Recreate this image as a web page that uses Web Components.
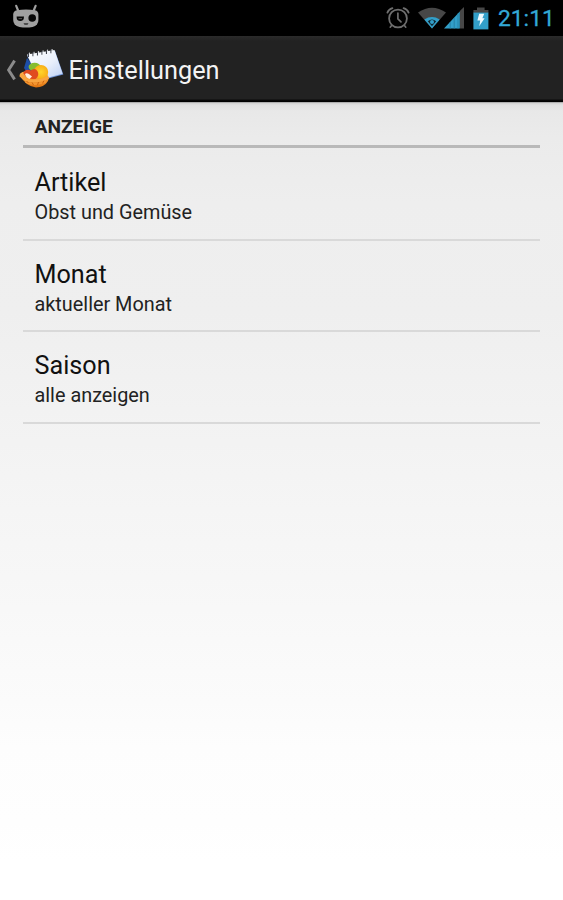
<!DOCTYPE html>
<html lang="de">
<head>
<meta charset="utf-8">
<title>Einstellungen</title>
<style>
html, body { margin: 0; height: 100%; }
body { font-family: Roboto, "Liberation Sans", sans-serif; overflow: hidden; }
</style>
</head>
<body>
<settings-screen></settings-screen>
<script>
const define = (name, html) => {
  const template = document.createElement('template');
  template.innerHTML = html;
  customElements.define(name, class extends HTMLElement {
    constructor() {
      super();
      this.attachShadow({ mode: 'open' }).append(template.content.cloneNode(true));
    }
  });
};

define('icon-robot', `
<style>:host{display:block;width:28px;height:26px} svg{display:block}</style>
<svg width="28" height="26" viewBox="0 0 28 26">
  <path d="M4.2 1.8 L6.3 7 M23.6 1.8 L21.5 7" stroke="#a0a0a0" stroke-width="2.2" stroke-linecap="round"/>
  <path d="M5 6.3 Q14 4.8 23 6.3 Q26.4 7 26.4 10.6 V16 Q26.4 21.5 20.5 22.9 Q14 24 7.5 22.9 Q1.2 21.5 1.2 16 V10.6 Q1.2 7 5 6.3Z" fill="#a0a0a0"/>
  <path d="M4.6 12.4 H12 Q12 17 8.3 17 Q4.6 17 4.6 12.4Z" fill="#080808"/>
  <path d="M6.5 14.6 H10" stroke="#555" stroke-width="1"/>
  <circle cx="20.2" cy="14" r="3.8" fill="#080808"/>
  <path d="M11.5 19.2 H16.5 L15.5 20.8 H12.5Z" fill="#303030"/>
</svg>`);

define('icon-alarm', `
<style>:host{display:block;width:24px;height:24px} svg{display:block}</style>
<svg width="24" height="24" viewBox="0 0 24 24" fill="none" stroke="#6e6e6e" stroke-linecap="round">
  <circle cx="12" cy="12.5" r="8.9" stroke-width="1.8"/>
  <path d="M11.9 7.2 V12.8 L15 15.8" stroke-width="1.7"/>
  <path d="M1.4 6.6 Q2.6 3.4 6.4 2.2 M22.6 6.6 Q21.4 3.4 17.6 2.2" stroke-width="1.8"/>
  <path d="M5.6 19.4 L4.2 21.2 M18.4 19.4 L19.8 21.2" stroke-width="1.6"/>
</svg>`);

define('icon-wifi', `
<style>:host{display:block;width:28px;height:22px} svg{display:block}</style>
<svg width="28" height="22" viewBox="0 0 28 22">
  <path d="M0 5.5 Q14 -4 28 5.5 L14 21.5Z" fill="#474747"/>
  <path d="M6.3 12.4 Q14 7.6 21.7 12.4 L14 21.5Z" fill="#329fc9"/>
  <path d="M9.8 14.2 Q14 10.8 18.2 14.2 L14 19.2Z" fill="#10252e"/>
  <circle cx="14" cy="15" r="2" fill="#329fc9"/>
</svg>`);

define('icon-signal', `
<style>:host{display:block;width:20px;height:22px} svg{display:block}</style>
<svg width="20" height="22" viewBox="0 0 20 22">
  <path d="M15.8 4 L20 0 V21.5 H15.8Z" fill="#474747"/>
  <path d="M0 21.5 L15.8 4.4 V21.5Z" fill="#329fc9"/>
  <path d="M6.2 15 V21.5 M10.2 11 V21.5 M14 6.5 V21.5" stroke="#2783a8" stroke-width="1"/>
</svg>`);

define('icon-battery', `
<style>:host{display:block;width:16px;height:23px} svg{display:block}</style>
<svg width="16" height="23" viewBox="0 0 16 23">
  <path d="M4 0.6 H11.6 V3 H15.4 V6 H0.4 V3 H4Z" fill="#474747"/>
  <path d="M0.4 5.6 H15.4 V22.4 H0.4Z" fill="#329fc9"/>
  <path d="M6.2 6.8 H11.2 L9.4 11.2 H11.6 L6.2 19.2 L7.2 13.4 H4.4Z" fill="#eefaff"/>
</svg>`);

define('status-bar', `
<style>
:host{display:flex;box-sizing:border-box;height:36px;padding:0 11px 0 12px;background:#000;align-items:center}
icon-robot{margin-top:-2px}
.system{display:flex;align-items:center;margin-left:auto}
icon-wifi{margin-left:8px} icon-signal{margin-left:-2px} icon-battery{margin-left:9px}
time{margin:1px 0 0 9px;font-size:22.8px;line-height:36px;-webkit-text-stroke:.3px #33a9d6;color:#33a9d6;width:54px;white-space:nowrap}
</style>
<icon-robot></icon-robot>
<div class="system"><icon-alarm></icon-alarm><icon-wifi></icon-wifi><icon-signal></icon-signal><icon-battery></icon-battery><time><slot></slot></time></div>`);

define('app-icon', `
<style>:host{display:block;width:46px;height:44px} svg{display:block}</style>
<svg width="46" height="44" viewBox="0 0 46 44">
  <defs>
    <linearGradient id="paper" x1="0" y1="0" x2="1" y2="1"><stop offset="0" stop-color="#fff"/><stop offset=".55" stop-color="#e9effb"/><stop offset="1" stop-color="#b9cdf3"/></linearGradient>
    <linearGradient id="basket" x1="0" y1="0" x2="0" y2="1"><stop offset="0" stop-color="#ffb850"/><stop offset="1" stop-color="#e0730f"/></linearGradient>
    <radialGradient id="lemon"><stop offset="0" stop-color="#ffd52c"/><stop offset="1" stop-color="#f9ae16"/></radialGradient>
  </defs>
  <path d="M8 10 L5 20 L9 26 L15 20Z" fill="#1d4fa8"/>
  <path d="M8 7.5 L36 3 L44.3 26.6 L20 33Z" fill="#6f94d8"/>
  <path d="M8 6.5 L35.5 2 L43.6 25.8 L20 32Z" fill="url(#paper)"/>
  <path d="M9.5 9V5M14 8.2V4.2M18.5 7.5V3.5M23 6.8V2.8M27.5 6V2M32 5.2V1.4" stroke="#3d414b" stroke-width="1.2"/>
  <path d="M10.6 9.5V4.6M15.1 8.8V3.8M19.6 8.1V3.1M24.1 7.4V2.4M28.6 6.6V1.6M33.1 5.8V1" stroke="#f4f6fb" stroke-width=".9"/>
  <path d="M.6 27 Q1 23 12 23 L27 26 Q31 28 29 33 Q25 39.5 17 39.5 Q7 38.5 .6 27Z" fill="url(#basket)"/>
  <ellipse cx="15.6" cy="19" rx="6" ry="4.2" fill="#86bd2f"/>
  <ellipse cx="22" cy="24" rx="7.2" ry="7" fill="url(#lemon)"/>
  <path d="M4 25 Q7 20 12 22.5 Q16 19.5 18.4 23 Q21 27.5 16.5 31 Q9 32 4 25Z" fill="#e04a20"/>
  <path d="M6 26 Q8 23.5 13 28.5 L10.5 31 Q7 30 6 26Z" fill="#fff0df"/>
  <path d="M1.2 27 Q7 33.5 14 33 Q22 33.2 29.4 29.4" fill="none" stroke="#f9a540" stroke-width="2.8"/>
  <path d="M6.5 34 Q15 38.2 27 33.6" fill="none" stroke="#f6952f" stroke-width="1.8"/>
  <path d="M7.5 33l2 2M13 34.4l1.5 2.6M19.5 34l-1 3.2M25 32.6l-1.5 2.8" stroke="#c4600e" stroke-width=".9"/>
</svg>`);

define('action-bar', `
<style>
:host{display:flex;box-sizing:border-box;height:66px;align-items:center;padding-left:6px;background:linear-gradient(#2b2b2b 0,#222 5px,#222 63px,#0a0a0a 64px,#000 66px);color:#f3f3f3}
.back{display:block;width:11px;height:22px;margin-top:1px}
app-icon{margin:1px 0 0 2px}
h1{margin:4px 0 0 3.5px;font-size:25.3px;line-height:32px;font-weight:400;white-space:nowrap}
</style>
<svg class="back" viewBox="0 0 11 22"><path d="M8.6 1.6 L2.6 11 L8.6 20.4" fill="none" stroke="#8b8b8b" stroke-width="2.9"/></svg>
<app-icon></app-icon>
<h1><slot></slot></h1>`);

define('preference-category', `
<style>
:host{display:block}
h2{box-sizing:border-box;margin:0 0 1px;height:46px;padding:13px 0 0 11.5px;font-size:19.2px;line-height:24px;font-weight:700;color:#222;border-bottom:3px solid #b9b9b9}
</style>
<h2><slot name="title"></slot></h2><slot></slot>`);

define('preference-item', `
<style>
:host{display:block;box-sizing:border-box;height:91.5px;padding:18px 0 0 11.5px;border-bottom:2px solid #d9d9d9;white-space:nowrap}
.title{font-size:25.2px;line-height:32px;color:#111}
.summary{font-size:19.85px;line-height:24px;margin-top:2px;color:#222}
</style>
<div class="title"><slot></slot></div><div class="summary"><slot name="summary"></slot></div>`);

define('settings-screen', `
<style>
:host{display:flex;flex-direction:column;height:900px;width:563px;overflow:hidden}
main{flex:1;padding:0 23px;background:linear-gradient(#8c8c8c 0,#d2d2d2 1px,#e2e2e2 3px,#e8e8e8 9px,#ebebeb 35px,#eee 100px,#efefef 210px,#f3f3f3 340px,#f7f7f7 475px,#fbfbfb 600px,#fdfdfd 645px,#fefefe 720px,#fff 760px)}
</style>
<status-bar>21:11</status-bar>
<action-bar>Einstellungen</action-bar>
<main>
  <preference-category><span slot="title">ANZEIGE</span>
    <preference-item>Artikel<span slot="summary">Obst und Gemüse</span></preference-item>
    <preference-item>Monat<span slot="summary">aktueller Monat</span></preference-item>
    <preference-item>Saison<span slot="summary">alle anzeigen</span></preference-item>
  </preference-category>
</main>`);
</script>
</body>
</html>
